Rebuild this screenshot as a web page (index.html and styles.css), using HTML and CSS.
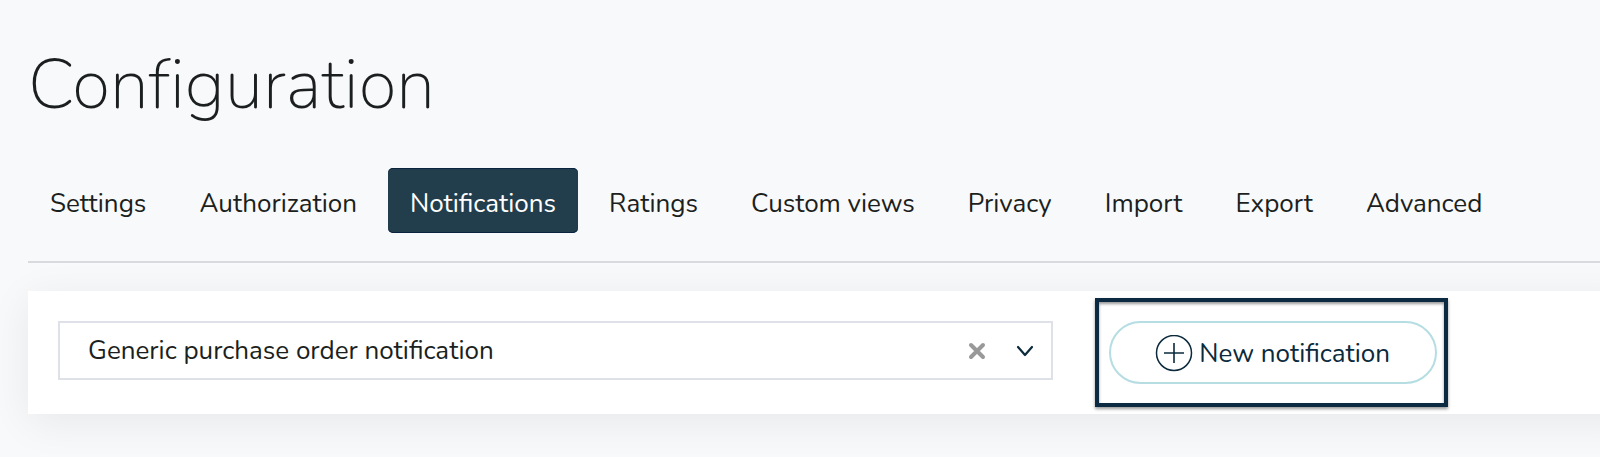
FILE: index.html
```
<!DOCTYPE html>
<html lang="en">
<head>
    <meta charset="UTF-8">
    <meta name="viewport" content="width=device-width, initial-scale=1.0">
    <title>Configuration</title>
    <link rel="stylesheet" href="styles.css">
</head>
<body>
    <h1>Configuration</h1>

    <nav class="tabs">
        <a href="#settings">Settings</a>
        <a href="#authorization">Authorization</a>
        <a href="#notifications" class="active">Notifications</a>
        <a href="#ratings">Ratings</a>
        <a href="#custom-views">Custom views</a>
        <a href="#privacy">Privacy</a>
        <a href="#import">Import</a>
        <a href="#export">Export</a>
        <a href="#advanced">Advanced</a>
    </nav>

    <main class="panel">
        <div class="picker">
            <select class="picker-select" aria-label="Notification">
                <option>Generic purchase order notification</option>
            </select>
            <div class="picker-icons">
                <button type="button" class="clear" aria-label="Clear">
                    <svg width="18" height="18" viewBox="0 0 18 18" fill="none" stroke="#999" stroke-width="4" stroke-linecap="round">
                        <path d="M3 3l12 12M15 3L3 15"/>
                    </svg>
                </button>
                <svg width="18" height="12" viewBox="0 0 18 12" fill="none" stroke="#0b2a3c" stroke-width="2.2" stroke-linecap="round" stroke-linejoin="round">
                    <path d="M2 2l7 8 7-8"/>
                </svg>
            </div>
        </div>
        <div class="highlight">
            <button type="button" class="new-btn">
                <svg width="38" height="38" viewBox="0 0 38 38" fill="none" stroke="#0b2a3c">
                    <circle cx="19" cy="18" r="17.5" stroke-width="1.5"/>
                    <path d="M19 8v20M9 18h20" stroke-width="1.6"/>
                </svg>
                <span>New notification</span>
            </button>
        </div>
    </main>
</body>
</html>
```
FILE: styles.css
```
* {
    box-sizing: border-box;
}

body {
    margin: 0;
    padding: 40px 0 40px 28px;
    background: #f8f9fb;
    color: #1c1f20;
    font-family: Nunito, Lato, sans-serif;
    font-size: 26px;
    overflow-x: hidden;
}

h1 {
    margin: 0;
    font-size: 70px;
    font-weight: 200;
    font-variant-ligatures: none;
    line-height: 90px;
}

.tabs {
    display: flex;
    gap: 9px;
    padding: 38px 0 28px;
    border-bottom: 2px solid #d9dadd;
}

.tabs a {
    padding: 7px 22px 0;
    border-radius: 5px;
    color: inherit;
    line-height: 58px;
    text-decoration: none;
    white-space: nowrap;
}

.tabs .active {
    background: #223e4c;
    box-shadow: inset 0 1px #0c2340, inset 0 -1px #0c2340;
    color: #fff;
}

.panel {
    display: flex;
    align-items: flex-start;
    gap: 42px;
    margin-top: 28px;
    margin-right: -40px;
    padding: 30px 203px 30px 30px;
    background: #fff;
    box-shadow: 0 8px 40px rgba(0, 0, 0, 0.07);
}

.picker {
    position: relative;
    flex: 1;
}

.picker-select {
    display: block;
    width: 100%;
    height: 59px;
    padding: 0 100px 0 28px;
    appearance: none;
    background: #fff;
    border: 2px solid #dfe1e8;
    border-radius: 0;
    color: #1c1f20;
    font: inherit;
}

/* sits over the right end of the select */
.picker-icons {
    position: absolute;
    top: 0;
    right: 19px;
    bottom: 0;
    display: flex;
    align-items: center;
    gap: 30px;
    pointer-events: none;
}

.clear {
    display: flex;
    padding: 0;
    background: none;
    border: 0;
    pointer-events: auto;
}

.highlight {
    position: relative;
    margin-left: 14px;
}

.highlight::after {
    content: "";
    position: absolute;
    inset: -23px -11px -23px -14px;
    border: 4px solid #0c2b42;
    box-shadow: 0 2px 3px rgba(0, 0, 0, 0.4), inset 0 2px 3px rgba(0, 0, 0, 0.4);
    pointer-events: none;
}

.new-btn {
    display: flex;
    align-items: center;
    gap: 6px;
    height: 63px;
    padding: 2px 45px 0 44px;
    background: #fff;
    border: 2px solid #b5dde2;
    border-radius: 32px;
    color: #0b2a3c;
    font: inherit;
    white-space: nowrap;
}
```
